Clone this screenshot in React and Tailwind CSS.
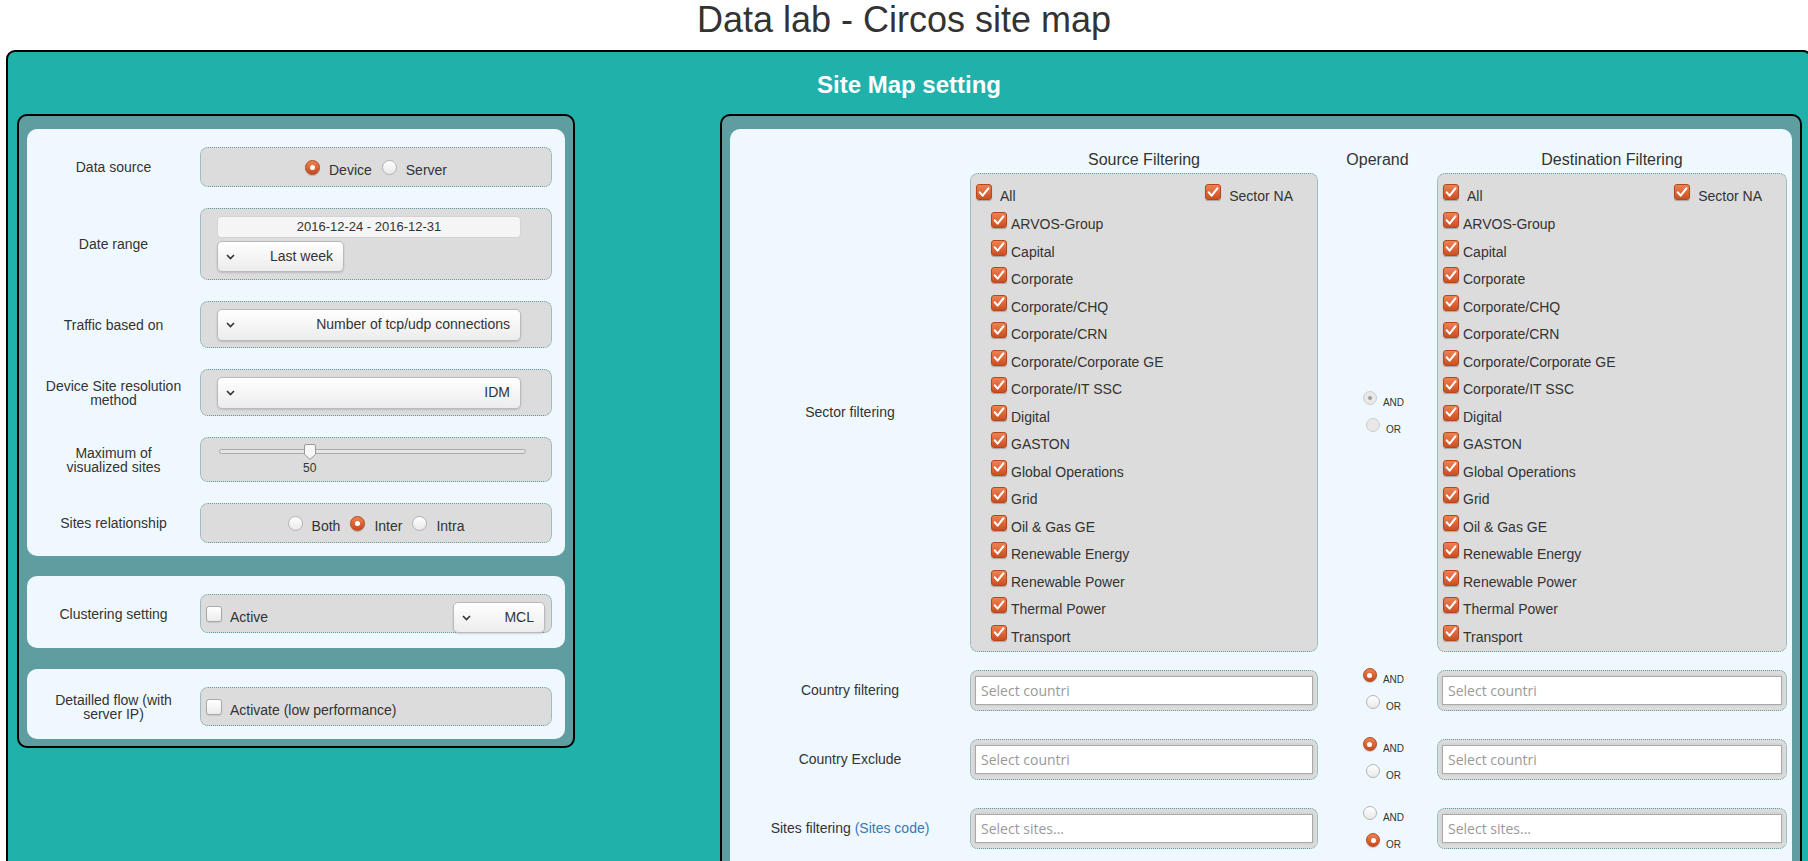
import React from "react";

const sectors = [
  "ARVOS-Group",
  "Capital",
  "Corporate",
  "Corporate/CHQ",
  "Corporate/CRN",
  "Corporate/Corporate GE",
  "Corporate/IT SSC",
  "Digital",
  "GASTON",
  "Global Operations",
  "Grid",
  "Oil & Gas GE",
  "Renewable Energy",
  "Renewable Power",
  "Thermal Power",
  "Transport",
];

const Checked = () => (
  <span className="flex h-[16px] w-[16px] shrink-0 items-center justify-center rounded-[3px] border border-[#b4481d] bg-gradient-to-b from-[#ee8152] to-[#cb4e21] shadow-[0_1px_1px_rgba(0,0,0,0.25)]">
    <svg width="12" height="11" viewBox="0 0 12 11">
      <path
        d="M1.8 5.4 L4.6 8.6 L10.4 1.4"
        fill="none"
        stroke="#fff"
        strokeWidth="2.1"
        strokeLinecap="round"
        strokeLinejoin="round"
      />
    </svg>
  </span>
);

const Unchecked = ({ className }) => (
  <div
    className={`h-[16px] w-[16px] shrink-0 rounded-[3px] border border-[#a9a9a9] bg-gradient-to-b from-white to-[#ececec] shadow-[0_1px_1px_rgba(0,0,0,0.1)] ${className}`}
  />
);

const Radio = ({ on, disabled, small }) => {
  const size = small ? "h-[14px] w-[14px]" : "h-[15px] w-[15px]";
  if (disabled) {
    return (
      <span className={`flex ${size} shrink-0 items-center justify-center rounded-full border border-[#cdcdcd] bg-[#e8e8e8]`}>
        {on && <span className="h-[4px] w-[4px] rounded-full bg-[#9c9c9c]" />}
      </span>
    );
  }
  if (on) {
    return (
      <span className={`flex ${size} shrink-0 items-center justify-center rounded-full border border-[#b4481d] bg-gradient-to-b from-[#ee8152] to-[#c64a1d] shadow-[0_1px_1px_rgba(0,0,0,0.2)]`}>
        <span className="h-[5px] w-[5px] rounded-full bg-white" />
      </span>
    );
  }
  return (
    <span className={`block ${size} shrink-0 rounded-full border border-[#b3b3b3] bg-gradient-to-b from-white to-[#e9e9e9]`} />
  );
};

const Chevron = () => (
  <svg width="9" height="6" viewBox="0 0 9 6">
    <path d="M1 1 L4.5 4.5 L8 1" fill="none" stroke="#333" strokeWidth="1.6" />
  </svg>
);

const Select = ({ value, className }) => (
  <div
    className={`flex items-center justify-between rounded-[5px] border border-[#bababa] bg-gradient-to-b from-white to-[#ececec] pl-[8px] pr-[10px] text-[14px] text-[#333] shadow-[0_1px_2px_rgba(0,0,0,0.15)] ${className}`}
  >
    <Chevron />
    <span>{value}</span>
  </div>
);

const Field = ({ className, children }) => (
  <div className={`rounded-[8px] border border-dotted border-[#5f9ea0] bg-[#dcdcdc] ${className}`}>
    {children}
  </div>
);

const Row = ({ label, box, children }) => (
  <div className="flex items-center">
    <div className="w-[173px] text-center leading-[14px]">{label}</div>
    <Field className={`w-[352px] ${box}`}>{children}</Field>
  </div>
);

const RadioText = ({ on, children }) => (
  <div className="flex items-center">
    <Radio on={on} />
    <span className="ml-[9px] pt-[6px] leading-[16px]">{children}</span>
  </div>
);

const OpLine = ({ on, disabled, label }) => (
  <div className="flex items-start">
    <Radio small on={on} disabled={disabled} />
    <span className="ml-[6px] mt-[6px] text-[10px] leading-[11px]">{label}</span>
  </div>
);

const Operand = ({ andOn, orOn, disabled, className }) => (
  <div className={`flex flex-col items-center gap-[10px] pl-[12px] ${className}`}>
    <OpLine label="AND" on={andOn} disabled={disabled} />
    <OpLine label="OR" on={orOn} disabled={disabled} />
  </div>
);

const SectorBox = ({ indent }) => (
  <Field className="h-[479px] pt-[10px]">
    <div className="flex h-[28px] justify-between pl-[5px] pr-[24px]">
      <div className="flex items-start">
        <Checked />
        <span className="ml-[8px] mt-[3px] leading-[18px]">All</span>
      </div>
      <div className="flex items-start">
        <Checked />
        <span className="ml-[8px] mt-[3px] leading-[18px]">Sector NA</span>
      </div>
    </div>
    {sectors.map((s) => (
      <div key={s} className={`flex h-[27.5px] items-start ${indent}`}>
        <Checked />
        <span className="ml-[4px] mt-[3px] leading-[18px]">{s}</span>
      </div>
    ))}
  </Field>
);

const SearchBox = ({ placeholder }) => (
  <Field className="h-[41px] px-[4px] py-[5px]">
    <div className="flex h-[29px] items-center border border-[#aaa] bg-white pl-[5px] shadow-[0_0_3px_rgba(0,0,0,0.12)]">
      <span className="w-[89px] overflow-hidden whitespace-nowrap font-['Open_Sans',sans-serif] text-[14px] text-[#999]">
        {placeholder}
      </span>
    </div>
  </Field>
);

const FilterRow = ({ label, placeholder, andOn, orOn }) => (
  <div className="grid h-[41px] grid-cols-[240px_348px_119px_350px] items-center">
    <div className="text-center">{label}</div>
    <SearchBox placeholder={placeholder} />
    <Operand andOn={andOn} orOn={orOn} className="self-start" />
    <SearchBox placeholder={placeholder} />
  </div>
);

export default function App() {
  return (
    <div className="h-[861px] w-full overflow-hidden bg-white font-['Liberation_Sans',Arial,sans-serif] text-[14px] text-[#333]">
      <h1 className="h-[40px] text-center text-[36px] font-normal leading-[40px] text-[#333]">
        Data lab - Circos site map
      </h1>

      <div className="ml-[6px] mt-[10px] h-[1000px] w-[1806px] rounded-[9px] border-2 border-black bg-[#20b2aa]">
        <h2 className="mt-[20px] text-center text-[24px] font-bold leading-[26px] text-white">
          Site Map setting
        </h2>

        <div className="ml-[9px] mt-[16px] flex items-start gap-[145px]">
          {/* left settings column */}
          <div className="flex w-[558px] flex-col rounded-[10px] border-2 border-black bg-[#5f9ea0] px-[8px] pb-[7px] pt-[13px]">
            <div className="flex flex-col gap-[21px] rounded-[10px] bg-[#f0f8ff] pb-[13px] pt-[18px]">
              <Row label="Data source" box="h-[40px] flex items-center justify-center">
                <RadioText on>Device</RadioText>
                <div className="ml-[10px]">
                  <RadioText>Server</RadioText>
                </div>
              </Row>

              <Row label="Date range" box="h-[72px] flex flex-col gap-[3px] pl-[16px] pt-[7px]">
                <div className="h-[22px] w-[304px] rounded-[4px] border border-[#d3d3d3] bg-[#f5f5f5] text-center text-[13px] leading-[20px]">
                  2016-12-24 - 2016-12-31
                </div>
                <Select value="Last week" className="h-[31px] w-[127px]" />
              </Row>

              <Row label="Traffic based on" box="h-[47px] flex items-center pl-[16px]">
                <Select value="Number of tcp/udp connections" className="h-[32px] w-[304px]" />
              </Row>

              <Row
                label={
                  <>
                    Device Site resolution
                    <br />
                    method
                  </>
                }
                box="h-[47px] flex items-center pl-[16px]"
              >
                <Select value="IDM" className="h-[32px] w-[304px]" />
              </Row>

              <Row
                label={
                  <>
                    Maximum of
                    <br />
                    visualized sites
                  </>
                }
                box="h-[45px] pl-[18px] pt-[11px]"
              >
                <div className="relative h-[5px] w-[307px] rounded-full border border-[#aaa] bg-[#e4e4e4]">
                  <div className="absolute left-[83px] top-[-6px] flex flex-col items-center">
                    <svg width="12" height="16" viewBox="0 0 12 16">
                      <path
                        d="M2 0.5 H10 A1.5 1.5 0 0 1 11.5 2 V10.5 L6 15.3 L0.5 10.5 V2 A1.5 1.5 0 0 1 2 0.5 Z"
                        fill="#f7f7f7"
                        stroke="#9a9a9a"
                      />
                    </svg>
                    <span className="mt-[1px] text-[12px] leading-[14px]">50</span>
                  </div>
                </div>
              </Row>

              <Row label="Sites relationship" box="h-[40px] flex items-center justify-center gap-[10px]">
                <RadioText>Both</RadioText>
                <RadioText on>Inter</RadioText>
                <RadioText>Intra</RadioText>
              </Row>
            </div>

            <div className="mt-[20px] rounded-[10px] bg-[#f0f8ff] pb-[15px] pt-[18px]">
              <Row label="Clustering setting" box="h-[39px] flex items-start justify-between">
                <div className="flex items-start">
                  <Unchecked className="ml-[5px] mt-[11px]" />
                  <span className="ml-[8px] mt-[13px] leading-[18px]">Active</span>
                </div>
                <Select value="MCL" className="mr-[6px] mt-[7px] h-[31px] w-[92px]" />
              </Row>
            </div>

            <div className="mt-[21px] rounded-[10px] bg-[#f0f8ff] pb-[13px] pt-[18px]">
              <Row
                label={
                  <>
                    Detailled flow (with
                    <br />
                    server IP)
                  </>
                }
                box="h-[39px] flex items-start"
              >
                <Unchecked className="ml-[5px] mt-[11px]" />
                <span className="ml-[8px] mt-[13px] leading-[18px]">Activate (low performance)</span>
              </Row>
            </div>
          </div>

          {/* right filtering column */}
          <div className="h-[820px] w-[1082px] rounded-[10px] border-2 border-black bg-[#5f9ea0] px-[8px] pt-[13px]">
            <div className="h-full rounded-[10px] bg-[#f0f8ff] pt-[21px]">
              <div className="grid h-[20px] grid-cols-[240px_348px_119px_350px] text-center text-[16px] leading-[20px]">
                <div />
                <div>Source Filtering</div>
                <div>Operand</div>
                <div>Destination Filtering</div>
              </div>

              <div className="mt-[3px] grid grid-cols-[240px_348px_119px_350px] items-center">
                <div className="text-center">Sector filtering</div>
                <SectorBox indent="pl-[20px]" />
                <Operand andOn disabled />
                <SectorBox indent="pl-[5px]" />
              </div>

              <div className="mt-[16px]">
                <FilterRow label="Country filtering" placeholder="Select countries" andOn />
              </div>
              <div className="mt-[28px]">
                <FilterRow label="Country Exclude" placeholder="Select countries" andOn />
              </div>
              <div className="mt-[28px]">
                <FilterRow
                  label={
                    <>
                      Sites filtering <span className="text-[#337ab7]">(Sites code)</span>
                    </>
                  }
                  placeholder="Select sites..."
                  orOn
                />
              </div>
            </div>
          </div>
        </div>
      </div>
    </div>
  );
}
